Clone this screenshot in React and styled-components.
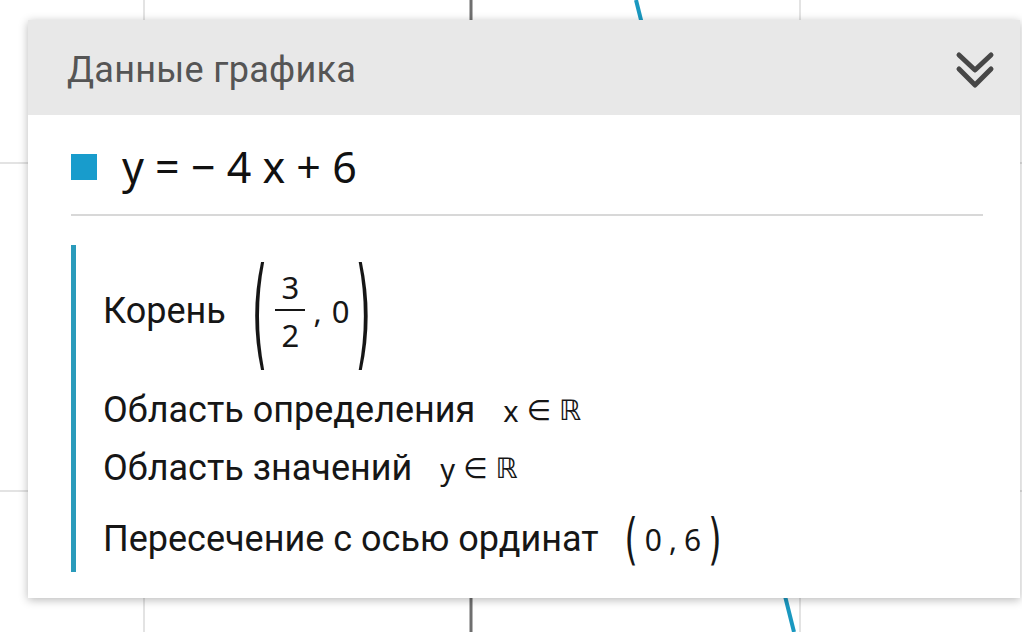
import React from "react";
import styled, { createGlobalStyle } from "styled-components";

const Global = createGlobalStyle`
  html, body { margin: 0; padding: 0; background: #ffffff; }
  body { font-family: Roboto, "Noto Sans", sans-serif; overflow: hidden; }
`;

const Page = styled.div`
  position: relative;
  width: 1022px;
  height: 632px;
  overflow: hidden;
  background: #ffffff;
`;

const GraphCanvas = styled.svg`
  position: absolute;
  left: 0;
  top: 0;
  width: 1022px;
  height: 632px;
`;

const Panel = styled.section`
  position: relative;
  margin: 20px 2px 0 28px;
  width: 992px;
  background: #ffffff;
  box-shadow: 0 2px 9px rgba(0, 0, 0, 0.28);
  display: flex;
  flex-direction: column;
`;

const Header = styled.header`
  height: 95px;
  background: #e8e8e8;
  display: flex;
  align-items: center;
  justify-content: space-between;
  padding: 0 25px 0 39px;
`;

const Title = styled.h2`
  margin: 5px 0 0 0;
  font-family: Roboto, sans-serif;
  font-weight: 400;
  font-size: 36px;
  color: #555555;
  letter-spacing: 0.3px;
`;

const ToggleIcon = styled.svg`
  width: 40px;
  height: 44px;
  display: block;
  margin-top: 4px;
`;

const Body = styled.div`
  padding: 20px 37px 26px 43px;
  display: flex;
  flex-direction: column;
`;

const EquationRow = styled.div`
  height: 64px;
  display: flex;
  align-items: center;
  gap: 25px;
`;

const ColorSwatch = styled.span`
  width: 26px;
  height: 26px;
  background: ${(p) => p.$color};
  flex: none;
`;

const Equation = styled.span`
  font-family: "Noto Sans", "Open Sans", sans-serif;
  font-size: 43px;
  color: #111111;
  white-space: pre;
  margin-top: -2px;
`;

const Divider = styled.hr`
  margin: 15px 0 0 0;
  border: 0;
  height: 2px;
  background: #d8d8d8;
`;

const InfoBlock = styled.div`
  margin-top: 29px;
  border-left: 5px solid #2a9bbb;
  padding: 10px 0 9px 27px;
  display: flex;
  flex-direction: column;
`;

const InfoRow = styled.div`
  height: ${(p) => p.$h}px;
  margin-top: ${(p) => p.$mt || 0}px;
  display: flex;
  align-items: center;
  gap: ${(p) => p.$gap || 28}px;
`;

const Label = styled.span`
  font-family: Roboto, sans-serif;
  font-size: 36px;
  color: #161616;
`;

const MathGroup = styled.span`
  display: inline-flex;
  align-items: center;
  font-family: "Noto Sans", "Open Sans", sans-serif;
  font-size: ${(p) => p.$size || 28}px;
  color: #161616;
`;

const Paren = styled.span`
  display: inline-block;
  font-family: "DejaVu Sans", sans-serif;
  font-weight: 400;
  font-size: ${(p) => p.$size}px;
  line-height: 1;
  transform: scale(${(p) => p.$sx || 1}, ${(p) => p.$sy});
  color: #161616;
`;

const Fraction = styled.span`
  display: inline-flex;
  flex-direction: column;
  align-items: center;
  margin: 0 4px 0 8px;
  line-height: 1;
`;

const FracBar = styled.span`
  width: 30px;
  height: 2px;
  background: #161616;
  margin: 6px 0 9px;
`;

const Sym = styled.span`
  font-family: "DejaVu Sans", sans-serif;
  font-size: ${(p) => p.$size || 28}px;
  margin: 0 ${(p) => p.$mx || 0}px;
`;

const Txt = styled.span`
  margin: 0 ${(p) => p.$mx || 0}px;
`;

export default function App() {
  return (
    <Page>
      <Global />
      <GraphCanvas viewBox="0 0 1022 632">
        <line x1="144" y1="0" x2="144" y2="632" stroke="#e3e3e3" strokeWidth="2" />
        <line x1="800" y1="0" x2="800" y2="632" stroke="#e3e3e3" strokeWidth="2" />
        <line x1="0" y1="163" x2="1022" y2="163" stroke="#e3e3e3" strokeWidth="2" />
        <line x1="0" y1="491" x2="1022" y2="491" stroke="#e3e3e3" strokeWidth="2" />
        <line x1="471" y1="0" x2="471" y2="632" stroke="#6f6f6f" strokeWidth="3" />
        <line x1="636" y1="0" x2="794" y2="632" stroke="#1a98c0" strokeWidth="4" />
      </GraphCanvas>
      <Panel>
        <Header>
          <Title>Данные графика</Title>
          <ToggleIcon viewBox="0 0 40 44">
            <g fill="none" stroke="#474747" strokeWidth="5" strokeLinecap="round" strokeLinejoin="round">
              <path d="M4 7 L20 22 L36 7" />
              <path d="M4 21 L20 37 L36 21" />
            </g>
          </ToggleIcon>
        </Header>
        <Body>
          <EquationRow>
            <ColorSwatch $color="#189ccc" />
            <Equation>y = − 4 x + 6</Equation>
          </EquationRow>
          <Divider />
          <InfoBlock>
            <InfoRow $h={112} $gap={26}>
              <Label>Корень</Label>
              <MathGroup $size={31}>
                <Paren $size={40} $sy={3.05}>(</Paren>
                <Fraction>
                  <span>3</span>
                  <FracBar />
                  <span>2</span>
                </Fraction>
                <Txt $mx={4}>,</Txt>
                <Txt $mx={6}>0</Txt>
                <Paren $size={40} $sy={3.05}>)</Paren>
              </MathGroup>
            </InfoRow>
            <InfoRow $h={44} $mt={21}>
              <Label>Область определения</Label>
              <MathGroup $size={29}>
                <Txt>x</Txt>
                <Sym $size={28} $mx={8}>∈</Sym>
                <Sym $size={28}>ℝ</Sym>
              </MathGroup>
            </InfoRow>
            <InfoRow $h={44} $mt={14}>
              <Label>Область значений</Label>
              <MathGroup $size={29}>
                <Txt>y</Txt>
                <Sym $size={28} $mx={8}>∈</Sym>
                <Sym $size={28}>ℝ</Sym>
              </MathGroup>
            </InfoRow>
            <InfoRow $h={48} $mt={25} $gap={26}>
              <Label>Пересечение с осью ординат</Label>
              <MathGroup $size={30}>
                <Paren $size={34} $sy={1.6}>(</Paren>
                <Txt $mx={7}>0</Txt>
                <Txt>,</Txt>
                <Txt $mx={7}>6</Txt>
                <Paren $size={34} $sy={1.6}>)</Paren>
              </MathGroup>
            </InfoRow>
          </InfoBlock>
        </Body>
      </Panel>
    </Page>
  );
}
